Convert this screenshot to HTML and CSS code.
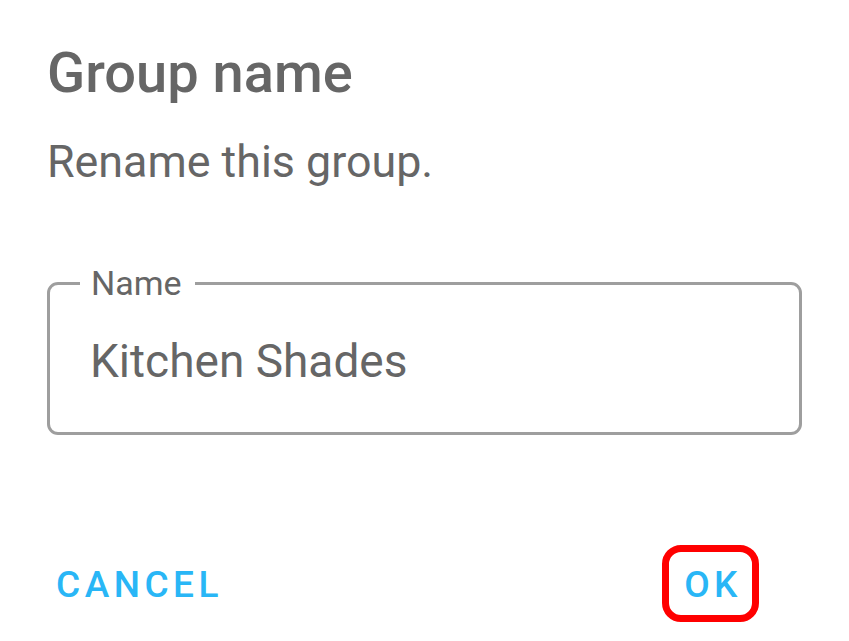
FILE: index.html
```html
<!DOCTYPE html>
<html>

<head>
    <link rel="stylesheet" href="styles.css">
</head>

<body>
    <div class="dialog">
        <h1 class="dialog-title">Group name</h1>
        <p class="dialog-text">Rename this group.</p>

        <fieldset class="text-field">
            <legend class="field-label">Name</legend>
            <div class="field-value">Kitchen Shades</div>
        </fieldset>

        <!-- Botões do diálogo -->
        <div class="dialog-actions">
            <button class="btn">Cancel</button>
            <button class="btn btn-marked">OK</button>
        </div>
    </div>
</body>

</html>
```

FILE: styles.css
```css
body {
    margin: 0;
    background-color: #ffffff;
    font-family: Roboto, "Liberation Sans", sans-serif;
    color: #666666;
}

.dialog {
    padding: 41px 47px 0 47px;
}

.dialog-title {
    margin: 0;
    font-size: 56px;
    line-height: 64px;
    font-weight: 500;
}

.dialog-text {
    margin: 27px 0 0 0;
    font-size: 44.8px;
    line-height: 60px;
}

.text-field {
    margin: 71px 0 0 0;
    padding: 0 0 0 40px;
    border: 3px solid #9e9e9e;
    border-radius: 11px;
    min-inline-size: 0;
}

.field-label {
    margin-left: -10px;
    padding: 0 13px 0 11px;
    font-size: 34px;
    line-height: 40px;
}

.field-value {
    padding: 28px 0 40.5px 0;
    font-size: 46px;
    line-height: 60px;
}

.dialog-actions {
    display: flex;
    justify-content: space-between;
    margin: 110px 43px 0 -13px;
}

.btn {
    background: none;
    border: 7px solid transparent;
    border-radius: 19px;
    padding: 11px 10px 8px 15px;
    font-family: Roboto, "Liberation Sans", sans-serif;
    font-size: 37px;
    line-height: 44px;
    font-weight: 500;
    letter-spacing: 4.5px;
    text-transform: uppercase;
    color: #29b6f6;
    cursor: pointer;
}

.btn-marked {
    border-color: #ff0000;
}
```
